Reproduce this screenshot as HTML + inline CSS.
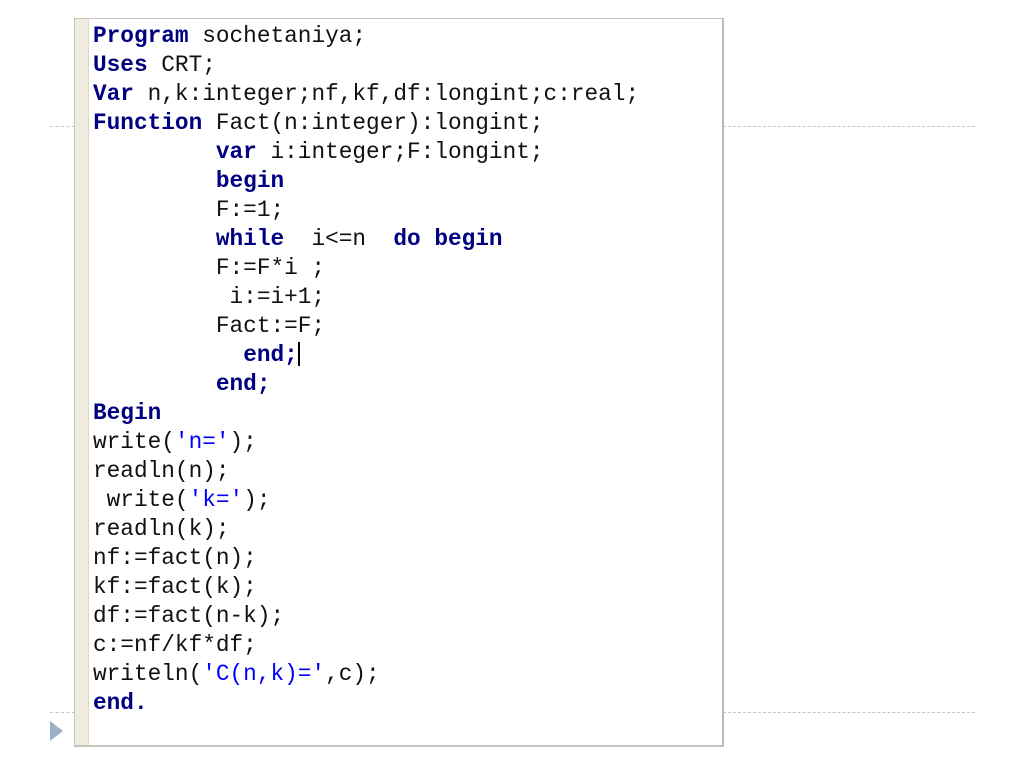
<!DOCTYPE html>
<html><head><meta charset="utf-8"><style>
body{margin:0;width:1024px;height:767px;background:#fff;position:relative;overflow:hidden}
.dash{position:absolute;height:0;border-top:1px dashed #b8c8d8}
.box{position:absolute;left:74px;top:18px;width:647px;height:726px;border:1px solid #c8c4bc;border-right:2px solid #c0bab2;border-bottom:2px solid #c8c4bc;background:#fff}
.gut{position:absolute;left:0;top:0;width:13px;height:100%;background:#efebdf;border-right:1px solid #ddd8c8}
pre{position:absolute;left:18px;top:3px;margin:0;font-family:"Liberation Mono",monospace;font-size:22.75px;line-height:29px;color:#111}
b{color:#000080}
s{text-decoration:none;color:#0000ff}
.cur{display:inline-block;width:2px;height:24px;background:#000;vertical-align:-5px}
</style></head><body>
<div class="dash" style="left:50px;width:25px;top:126px"></div>
<div class="dash" style="left:723px;width:252px;top:126px"></div>
<div class="dash" style="left:50px;width:25px;top:712px"></div>
<div class="dash" style="left:723px;width:252px;top:712px"></div>
<svg style="position:absolute;left:50px;top:721px" width="14" height="20"><polygon points="0,0 13,10 0,20" fill="#9ab2c8"/></svg>
<div class="box"><div class="gut"></div>
<pre><b>Program</b> sochetaniya;
<b>Uses</b> CRT;
<b>Var</b> n,k:integer;nf,kf,df:longint;c:real;
<b>Function</b> Fact(n:integer):longint;
         <b>var</b> i:integer;F:longint;
         <b>begin</b>
         F:=1;
         <b>while</b>  i&lt;=n  <b>do begin</b>
         F:=F*i ;
          i:=i+1;
         Fact:=F;
           <b>end;</b><span class="cur"></span>
         <b>end;</b>
<b>Begin</b>
write(<s>'n='</s>);
readln(n);
 write(<s>'k='</s>);
readln(k);
nf:=fact(n);
kf:=fact(k);
df:=fact(n-k);
c:=nf/kf*df;
writeln(<s>'C(n,k)='</s>,c);
<b>end.</b></pre>
</div>
</body></html>
